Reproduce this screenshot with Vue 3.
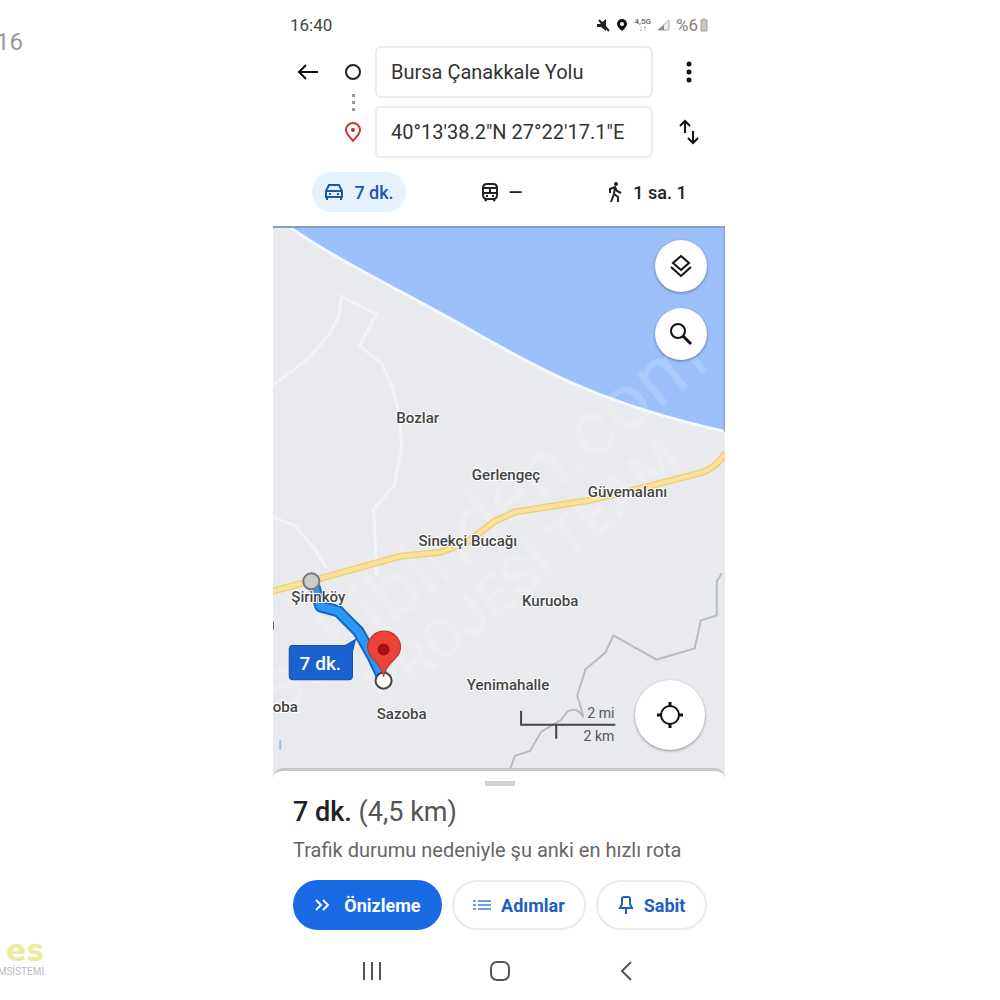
<script setup>
import { ref } from 'vue'

const origin = ref('Bursa Çanakkale Yolu')
const destination = ref(`40°13'38.2"N 27°22'17.1"E`)
const mode = ref('car')

const places = [
  { name: 'Bozlar', x: 145, y: 196 },
  { name: 'Gerlengeç', x: 233, y: 253 },
  { name: 'Güvemalanı', x: 354, y: 270 },
  { name: 'Sinekçi Bucağı', x: 195, y: 319 },
  { name: 'Kuruoba', x: 277, y: 379 },
  { name: 'Şirinköy', x: 46, y: 375 },
  { name: 'Yenimahalle', x: 235, y: 462 },
  { name: 'Sazoba', x: 129, y: 491 },
  { name: 'oba', x: 13, y: 484 }
]
</script>

<template>
  <div class="page">
    <aside class="side">
      <span class="side-number">16</span>
      <div class="brand">
        <span class="brand-name">es</span>
        <span class="brand-sub">EMSİSTEMİ.</span>
      </div>
    </aside>

    <main class="phone">
      <header class="status">
        <span>16:40</span>
        <div class="status-icons">
          <svg width="14" height="14" viewBox="0 0 14 14">
            <path d="M1 6h3l6-5v12L5 9H1z" fill="#222" />
            <path d="M3 2l10 11" stroke="#222" stroke-width="2" />
          </svg>
          <svg width="12" height="14" viewBox="0 0 12 14">
            <path d="M6 1a5 5 0 0 1 5 5c0 3-5 7-5 7S1 9 1 6a5 5 0 0 1 5-5z" fill="#111" />
            <circle cx="6" cy="6" r="2" fill="#fff" />
          </svg>
          <span class="lte">4,5G<br />↓↑</span>
          <svg width="13" height="12" viewBox="0 0 13 12">
            <path d="M1 11L12 1v10z" fill="#eee" stroke="#aaa" />
            <path d="M1 11l6-5v5z" fill="#888" />
          </svg>
          <span class="percent">
            %6
            <svg width="8" height="14" viewBox="0 0 8 14">
              <path d="M1 2h2V1h2v1h2v11H1z" fill="#cbc5c2" stroke="#a39c98" />
            </svg>
          </span>
        </div>
      </header>

      <section class="route">
        <button class="icon-btn" aria-label="Geri">
          <svg width="22" height="20" viewBox="0 0 22 20" fill="none" stroke="#111" stroke-width="2">
            <path d="M21 10H3M9 3l-7 7 7 7" />
          </svg>
        </button>
        <div class="markers">
          <svg width="20" height="80" viewBox="0 0 20 80" fill="none">
            <circle cx="10" cy="10" r="7" stroke="#222" stroke-width="2" />
            <g fill="#999">
              <rect x="9" y="32" width="3" height="3" />
              <rect x="9" y="39" width="3" height="3" />
              <rect x="9" y="46" width="3" height="3" />
            </g>
            <path d="M10 61a7 7 0 0 1 7 7c0 4-4 7-7 11-3-4-7-7-7-11a7 7 0 0 1 7-7z" stroke="#cf3434" stroke-width="2" />
            <circle cx="10" cy="68" r="2" fill="#b33" />
          </svg>
        </div>
        <div class="fields">
          <input v-model="origin" aria-label="Başlangıç" />
          <input v-model="destination" aria-label="Hedef" />
        </div>
        <div class="actions">
          <button class="icon-btn" aria-label="Diğer">
            <svg width="24" height="24" viewBox="0 0 24 24" fill="#111">
              <circle cx="12" cy="4" r="2.5" />
              <circle cx="12" cy="12" r="2.5" />
              <circle cx="12" cy="20" r="2.5" />
            </svg>
          </button>
          <button class="icon-btn" aria-label="Yer değiştir">
            <svg width="24" height="28" viewBox="0 0 24 28" fill="none" stroke="#111" stroke-width="2">
              <path d="M8 15V3M3 8l5-5 5 5M16 13v12M11 20l5 5 5-5" />
            </svg>
          </button>
        </div>
      </section>

      <nav class="modes">
        <button class="mode" :class="{ active: mode === 'car' }" @click="mode = 'car'">
          <svg width="20" height="20" viewBox="0 0 20 20" fill="none" stroke="currentColor" stroke-width="2">
            <path d="M2 9l3-6h10l3 6v6H2zM2 9h16M3 15v3M17 15v3" />
            <path d="M5 12h2M13 12h2" />
          </svg>
          7 dk.
        </button>
        <button class="mode" :class="{ active: mode === 'transit' }" @click="mode = 'transit'">
          <svg width="18" height="20" viewBox="0 0 18 20" fill="none" stroke="currentColor" stroke-width="2">
            <path d="M6 2h6q4 0 4 4v7q0 4-4 4H6q-4 0-4-4V6q0-4 4-4zM2 6h14M2 11h14M9 6v5M6 17l-2 2M12 17l2 2" />
            <path d="M5 14h2M11 14h2" />
          </svg>
          —
        </button>
        <button class="mode" :class="{ active: mode === 'walk' }" @click="mode = 'walk'">
          <svg width="16" height="22" viewBox="0 0 16 22" fill="none" stroke="currentColor" stroke-width="2">
            <circle cx="9" cy="3" r="2" fill="currentColor" stroke="none" />
            <path d="M3 12V8l5-2 2 4 4 2M8 6l-1 7-3 8M7 13l4 3v5" />
          </svg>
          1 sa. 1
        </button>
      </nav>

      <section class="map">
        <svg class="canvas" viewBox="0 0 452 550" preserveAspectRatio="xMidYMin slice">
          <rect width="452" height="550" fill="#e8eaed" />
          <path d="M16 0C60 32 130 65 200 105S330 178 452 205V0z" fill="#9bc0fc" />
          <path d="M16 0C60 32 130 65 200 105S330 178 452 205" fill="none" stroke="#f2f9ff" stroke-width="3" />
          <path d="M0 1h452M451 0v205" fill="none" stroke="#7f9fce" stroke-width="2" />
          <g fill="none" stroke="#f2f3f5" stroke-width="3">
            <path d="M0 159l34-25 22-25 10-18 3-21 35 18-17 31 22 18 10 22 8 30 2 31-7 38-21 24 2 38 1 28" />
            <path d="M0 290l22 8 20 23 12 20" />
          </g>
          <g class="watermark">
            <text transform="translate(8 488) rotate(-39)">sahibinden.com</text>
            <text class="small" transform="translate(112 482) rotate(-39)">PROJESİ TEAM</text>
          </g>
          <g fill="none" stroke="#b9bbbf" stroke-width="2">
            <path d="M448 346l-5 8v34l-16 5-6 28-38 11-43-24-8 17-20 17-8 26 6 20" />
            <path d="M310 490q-6-12-16-6l-6 8-20 12-11 19-15 5-7 18" />
          </g>
          <path d="M0 364L52 350l76-21 40-4 26-10 28-21 20-9 70-11 45-10 70-18q14-4 25-20" fill="none" stroke="#eecf7d" stroke-width="7" stroke-linejoin="round" />
          <path d="M0 364L52 350l76-21 40-4 26-10 28-21 20-9 70-11 45-10 70-18q14-4 25-20" fill="none" stroke="#fbe29a" stroke-width="4" stroke-linejoin="round" />
          <path d="M42 359l6 20 18 5 20 20 14 25 10 21" fill="none" stroke="#1765c0" stroke-width="12" stroke-linejoin="round" />
          <path d="M42 359l6 20 18 5 20 20 14 25 10 21" fill="none" stroke="#2a98f5" stroke-width="8" stroke-linejoin="round" />
          <circle cx="39" cy="354" r="8" fill="#c9cbc9" stroke="#777" stroke-width="2" />
          <circle cx="111" cy="453" r="8" fill="#fff" stroke="#444" stroke-width="2" />
          <path d="M111 449c-2-14-16-18-16-29a16 16 0 0 1 33 0c0 11-15 15-17 29z" fill="#ea4338" stroke="#b8342c" />
          <circle cx="111" cy="422" r="6" fill="#a5120f" />
          <path d="M20 418h53l10-6-3 12v24q0 4-4 4H21q-4 0-4-4v-26q0-4 3-4z" fill="#1b62d1" stroke="#114da8" />
          <text class="eta" x="48" y="442">7 dk.</text>
          <path d="M8 512v10" stroke="#9dbbe8" stroke-width="2" />
          <path d="M0 394v8" stroke="#222" stroke-width="3" />
          <text v-for="p in places" :key="p.name" class="place" :x="p.x" :y="p.y">{{ p.name }}</text>
          <path d="M248 483v14h94M283 497v14" fill="none" stroke="#444" stroke-width="2" />
          <text class="scale" x="341" y="490">2 mi</text>
          <text class="scale" x="341" y="513">2 km</text>
        </svg>
        <div class="map-tools">
          <button class="round" aria-label="Katmanlar">
            <svg width="24" height="26" viewBox="0 0 24 26" fill="none" stroke="#111" stroke-width="2">
              <path d="M12 3l8 7-8 7-8-7zM2 14l10 9 10-9" />
            </svg>
          </button>
          <button class="round" aria-label="Ara">
            <svg width="26" height="26" viewBox="0 0 26 26" fill="none" stroke="#111">
              <circle cx="10" cy="10" r="7" stroke-width="2" />
              <path d="M15 15l8 8" stroke-width="3" />
            </svg>
          </button>
        </div>
        <button class="round locate" aria-label="Konumum">
          <svg width="28" height="28" viewBox="0 0 28 28" fill="none" stroke="#111" stroke-width="3">
            <circle cx="14" cy="14" r="9" stroke-width="2" />
            <path d="M14 1v5M14 22v5M1 14h5M22 14h5" />
          </svg>
        </button>
      </section>

      <section class="sheet">
        <div class="handle"></div>
        <h1>7 dk. <span>(4,5 km)</span></h1>
        <p>Trafik durumu nedeniyle şu anki en hızlı rota</p>
        <div class="buttons">
          <button class="pill primary">
            <svg width="16" height="14" viewBox="0 0 16 14" fill="none" stroke="currentColor" stroke-width="2">
              <path d="M2 2l5 5-5 5M9 2l5 5-5 5" />
            </svg>
            Önizleme
          </button>
          <button class="pill">
            <svg width="18" height="14" viewBox="0 0 18 14" fill="none" stroke="#6d9ee6" stroke-width="2">
              <path d="M0 3h3M5 3h13M0 7h3M5 7h13M0 11h3M5 11h13" />
            </svg>
            Adımlar
          </button>
          <button class="pill">
            <svg width="16" height="20" viewBox="0 0 16 20" fill="none" stroke="currentColor" stroke-width="2">
              <path d="M4 9V4q0-2 2-2h4q2 0 2 2v5l2 4H2zM8 13v6" />
            </svg>
            Sabit
          </button>
        </div>
      </section>

      <nav class="system">
        <button class="icon-btn" aria-label="Son uygulamalar">
          <svg width="20" height="20" viewBox="0 0 20 20" stroke="#555" stroke-width="2">
            <path d="M2 1v18M10 1v18M18 1v18" />
          </svg>
        </button>
        <button class="icon-btn" aria-label="Ana ekran">
          <svg width="22" height="20" viewBox="0 0 22 20" fill="none" stroke="#555" stroke-width="2">
            <rect x="2" y="1" width="18" height="18" rx="6" />
          </svg>
        </button>
        <button class="icon-btn" aria-label="Geri dön">
          <svg width="20" height="20" viewBox="0 0 20 20" fill="none" stroke="#555" stroke-width="2">
            <path d="M14 1l-9 9 9 9" />
          </svg>
        </button>
      </nav>
    </main>
  </div>
</template>

<style>
body { margin: 0; background: #fff; }
</style>

<style scoped>
.page { display: grid; grid-template-columns: 273fr 452fr 275fr; min-height: 100vh; font-family: Roboto, "Liberation Sans", sans-serif; color: #222; overflow: hidden; }
button { font: inherit; border: none; background: none; padding: 0; cursor: pointer; color: inherit; }
svg { display: block; flex: none; }
.side { display: flex; flex-direction: column; justify-content: space-between; align-items: flex-start; padding: 28px 0 22px; }
.side-number { margin-left: -4px; font-size: 24px; line-height: 28px; color: #999; }
.brand { display: flex; flex-direction: column; }
.brand-name { margin-left: 6px; font: 700 30px/30px "DejaVu Sans", sans-serif; color: #efe99f; }
.brand-sub { margin-left: -8px; font-size: 10px; line-height: 12px; color: #bbb; }
.phone { display: flex; flex-direction: column; min-width: 0; min-height: 100vh; }
.status { display: flex; justify-content: space-between; align-items: center; height: 20px; padding: 15px 17px 11px; font-size: 17px; color: #444; }
.status-icons { display: flex; align-items: center; gap: 6px; }
.lte { font-size: 8px; line-height: 7px; font-weight: 700; color: #777; text-align: center; }
.percent { display: flex; align-items: center; gap: 2px; color: #88807c; }
.route { display: flex; gap: 12px; padding: 0 24px; }
.icon-btn { display: flex; align-items: center; justify-content: center; }
.route > .icon-btn { width: 22px; height: 52px; }
.markers { padding: 16px 0 0 12px; }
.fields { display: flex; flex: 1; flex-direction: column; gap: 8px; min-width: 0; }
.fields input { box-sizing: border-box; width: 100%; height: 52px; padding: 0 14px; border: 2px solid #ebebeb; border-radius: 6px; font: 20px Roboto, sans-serif; color: #333; background: #fff; outline: none; }
.actions { display: flex; flex-direction: column; gap: 8px; padding-left: 12px; }
.actions .icon-btn { height: 52px; }
.modes { display: grid; grid-template-columns: 94px 1fr 100px; align-items: center; padding: 14px 28px 14px 39px; }
.mode { display: flex; align-items: center; justify-content: center; gap: 10px; height: 40px; border-radius: 20px; font-size: 18px; font-weight: 500; white-space: nowrap; }
.mode.active { background: #e6f1fe; color: #1b57b0; }
.map { position: relative; flex: 1; min-height: 400px; overflow: hidden; }
.canvas { position: absolute; width: 100%; height: 100%; }
.watermark { fill: #fff; opacity: 0.15; font-size: 78px; }
.watermark .small { font-size: 56px; font-weight: 500; }
.place { font-size: 15px; font-weight: 500; fill: #444; text-anchor: middle; stroke: #fff; stroke-width: 2px; paint-order: stroke; }
.eta { font-size: 19px; font-weight: 500; fill: #fff; text-anchor: middle; }
.scale { font-size: 14px; fill: #555; text-anchor: end; }
.map-tools { position: absolute; top: 14px; right: 18px; display: flex; flex-direction: column; gap: 16px; }
.round { display: flex; align-items: center; justify-content: center; width: 52px; height: 52px; border-radius: 50%; background: #fff; box-shadow: 0 1px 3px rgba(0, 0, 0, 0.4); }
.locate { position: absolute; right: 20px; bottom: 28px; width: 70px; height: 70px; }
.sheet { position: relative; margin-top: -10px; padding: 10px 18px 0 20px; border-top: 3px solid #c4c5c8; border-radius: 10px 10px 0 0; background: #fff; }
.handle { width: 30px; height: 5px; margin: 0 auto; background: #d0d0d0; }
h1 { margin: 10px 0 0; font-size: 27px; line-height: 32px; font-weight: 500; }
h1 span { font-weight: 400; color: #555; }
p { margin: 10px 0 18px; font-size: 20px; line-height: 24px; color: #666; white-space: nowrap; }
.buttons { display: flex; gap: 10px; }
.pill { display: flex; flex: 134 1 0; align-items: center; justify-content: center; gap: 10px; box-sizing: border-box; height: 50px; border: 2px solid #ebebee; border-radius: 25px; font-size: 18px; font-weight: 700; color: #1d5fbf; }
.pill.primary { flex-grow: 149; gap: 14px; border-color: #1a6ae6; background: #1a6ae6; color: #fff; }
.pill:last-child { flex-grow: 110; }
.system { display: flex; justify-content: space-between; align-items: center; height: 20px; padding: 31px 88px 19px 89px; }
</style>
